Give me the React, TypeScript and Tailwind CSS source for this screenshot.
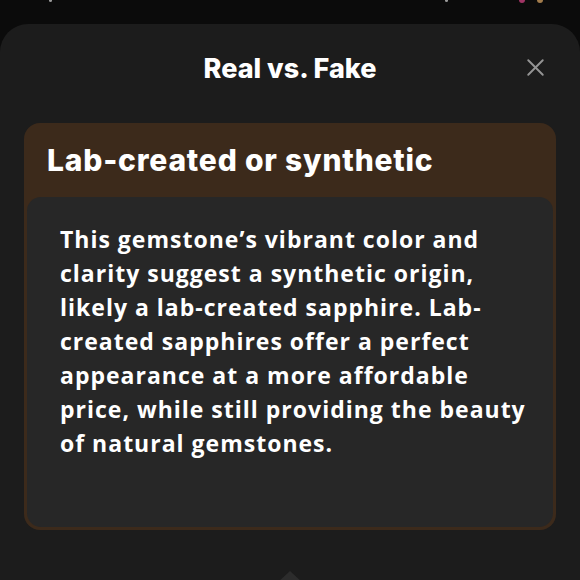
import { X } from "lucide-react";

export default function App() {
  return (
    <div className="relative w-[580px] h-[580px] overflow-hidden bg-[#0b0b0b]" style={{ fontFamily: "Inter, 'Noto Sans', sans-serif" }}>
      {/* bits of the page behind the sheet */}
      <div className="absolute left-[49px] top-[-1px] w-[3px] h-[3px] rounded-full bg-[#9a9a9a]" />
      <div className="absolute left-[445px] top-[-1px] w-[3px] h-[3px] rounded-full bg-[#9a9a9a]" />
      <div className="absolute left-[519px] top-[-3px] w-[6px] h-[6px] rounded-full bg-[#a03464]" />
      <div className="absolute left-[537px] top-[-3px] w-[6px] h-[6px] rounded-full bg-[#a27c4c]" />

      {/* sheet */}
      <div className="mt-[24px] h-[560px] rounded-t-[28px] bg-[#1c1c1c] flex flex-col">
        <div className="relative h-[90px] flex items-center justify-center">
          <h1 className="text-[27px] font-extrabold text-white">Real vs. Fake</h1>
          <button className="absolute right-[30px] top-[29px] text-[#949494]">
            <X size={29} strokeWidth={1.6} />
          </button>
        </div>

        <div className="mx-[24px] mt-[9px] rounded-[16px] bg-[#3c2a1b] p-[3px] pt-0 flex flex-col">
          <div className="h-[74px] px-[20px] flex items-center">
            <h2 className="text-[30px] font-extrabold text-white tracking-[0.8px]">Lab-created or synthetic</h2>
          </div>
          <div className="h-[330px] rounded-[14px] bg-[#272727] pl-[33px] pr-[26px] pt-[25px]">
            <p
              className="text-[23px] font-bold leading-[34px] text-white tracking-[1px]"
              style={{ fontFamily: "'Open Sans', sans-serif" }}
            >
              This gemstone’s vibrant color and clarity suggest a synthetic origin, likely a lab-created sapphire. Lab-created sapphires offer a perfect appearance at a more affordable price, while still providing the beauty of natural gemstones.
            </p>
          </div>
        </div>

        <div className="flex-1 flex items-end justify-center">
          <div className="w-0 h-0 border-l-[14px] border-r-[14px] border-b-[13px] border-l-transparent border-r-transparent border-b-[#2c2c2c]" />
        </div>
      </div>
    </div>
  );
}
